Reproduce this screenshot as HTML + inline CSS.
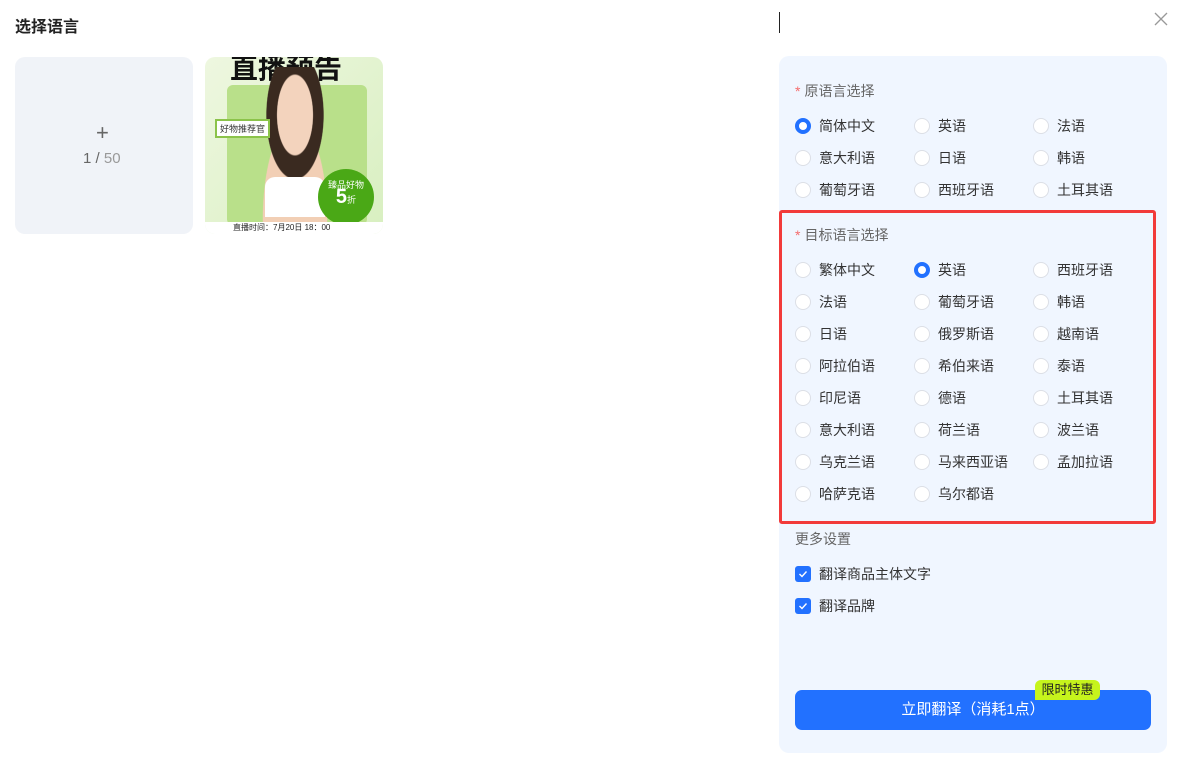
<!DOCTYPE html>
<html><head><meta charset="utf-8"><style>
*{margin:0;padding:0;box-sizing:border-box}
body{width:1180px;height:772px;background:#fff;font-family:"Liberation Sans","Noto Sans CJK SC",sans-serif;position:relative;overflow:hidden;color:#333}
.a{position:absolute}
.r{position:absolute;width:16px;height:16px;border-radius:50%;background:#fff;border:1px solid #dcdfe6}
.r.on{border:4.5px solid #2271ff}
.t{position:absolute;font-size:14px;color:#333;line-height:16px}
.lbl{position:absolute;font-size:14px;color:#666;line-height:16px}
.lbl b{color:#f56c6c;font-weight:normal;margin-right:4px}
.cb{position:absolute;width:16px;height:16px;border-radius:3px;background:#2271ff}
</style></head><body>
<div class="a" style="left:15px;top:13px;font-size:16px;font-weight:bold;color:#222">选择语言</div>
<div class="a" style="left:15px;top:57px;width:178px;height:177px;background:#f0f3f8;border-radius:10px"></div>
<div class="a" style="left:96px;top:120px;font-size:22px;color:#666;font-weight:300">+</div>
<div class="a" style="left:83px;top:150px;font-size:15px;color:#666">1 / <span style="color:#999">50</span></div>
<div class="a" style="left:205px;top:57px;width:178px;height:177px;border-radius:10px;overflow:hidden;background:linear-gradient(135deg,#eef7e0,#d8efc0)">
 <div class="a" style="left:25px;top:-10px;font-size:28px;font-weight:bold;color:#111">直播预告</div>
 <div class="a" style="left:22px;top:28px;width:140px;height:140px;background:#b9e08a;border-radius:6px"></div>
 <div class="a" style="left:40px;top:10px;width:100px;height:160px;background:radial-gradient(ellipse at 50% 30%,#f3d3bd 0 25%,#3a2a20 26% 40%,transparent 41%),radial-gradient(ellipse at 50% 95%,#f2cfb5 0 45%,transparent 46%)"></div>
 <div class="a" style="left:60px;top:120px;width:60px;height:40px;background:#fff;border-radius:10px 10px 0 0"></div>
 <div class="a" style="left:10px;top:62px;font-size:9px;background:#fff;border:2px solid #8bc34a;padding:1px 3px">好物推荐官</div>
 <div class="a" style="left:113px;top:112px;width:56px;height:56px;border-radius:50%;background:#4aa816;color:#fff;font-size:9px;text-align:center;padding-top:10px;line-height:12px">臻品好物<br><span style="font-size:20px;font-weight:bold">5</span>折</div>
 <div class="a" style="left:0;top:165px;width:178px;height:12px;background:#fff;font-size:8px;padding-left:28px;color:#222">直播时间：7月20日 18：00</div>
</div>
<div class="a" style="left:779px;top:12px;width:1px;height:21px;background:#222"></div>
<svg class="a" style="left:1154px;top:12px" width="14" height="14"><path d="M1 1L13 13M13 1L1 13" stroke="#999" stroke-width="1.3"/></svg>
<div class="a" style="left:779px;top:56px;width:388px;height:697px;background:#f0f6ff;border-radius:10px"></div>
<div class="lbl" style="left:795px;top:83px"><b>*</b>原语言选择</div>
<div class="a" style="left:779px;top:210px;width:377px;height:314px;border:3px solid #f23a3a;border-radius:3px"></div>
<div class="lbl" style="left:795px;top:227px"><b>*</b>目标语言选择</div>
<div id="g"></div>
<div class="lbl" style="left:795px;top:531px">更多设置</div>
<div class="cb" style="left:795px;top:566px"></div><svg class="a" style="left:798px;top:569px" width="10" height="10"><path d="M1.5 5L4 7.5L8.5 2.5" stroke="#fff" stroke-width="1.4" fill="none"/></svg>
<div class="t" style="left:819px;top:566px">翻译商品主体文字</div>
<div class="cb" style="left:795px;top:598px"></div><svg class="a" style="left:798px;top:601px" width="10" height="10"><path d="M1.5 5L4 7.5L8.5 2.5" stroke="#fff" stroke-width="1.4" fill="none"/></svg>
<div class="t" style="left:819px;top:598px">翻译品牌</div>
<div class="a" style="left:795px;top:690px;width:356px;height:40px;background:#2271ff;border-radius:7px;color:#fff;font-size:15px;text-align:center;line-height:40px">立即翻译（消耗1点）</div>
<div class="a" style="left:1035px;top:680px;width:65px;height:20px;background:#c6f41c;border-radius:6px 6px 6px 0;font-size:13px;color:#222;text-align:center;line-height:20px">限时特惠</div>
<script>
var cols=[795,914,1033];
function row(list,y,sel){list.forEach(function(s,i){if(!s)return;document.write('<div class="r'+(s===sel?' on':'')+'" style="left:'+cols[i]+'px;top:'+(y-8)+'px"></div><div class="t" style="left:'+(cols[i]+24)+'px;top:'+(y-8)+'px">'+s+'</div>');});}
row(["简体中文","英语","法语"],126,"简体中文");
row(["意大利语","日语","韩语"],158);
row(["葡萄牙语","西班牙语","土耳其语"],190);
var T=[["繁体中文","英语","西班牙语"],["法语","葡萄牙语","韩语"],["日语","俄罗斯语","越南语"],["阿拉伯语","希伯来语","泰语"],["印尼语","德语","土耳其语"],["意大利语","荷兰语","波兰语"],["乌克兰语","马来西亚语","孟加拉语"],["哈萨克语","乌尔都语",""]];
T.forEach(function(r,i){row(r,270+32*i,"英语");});
</script>
</body></html>
